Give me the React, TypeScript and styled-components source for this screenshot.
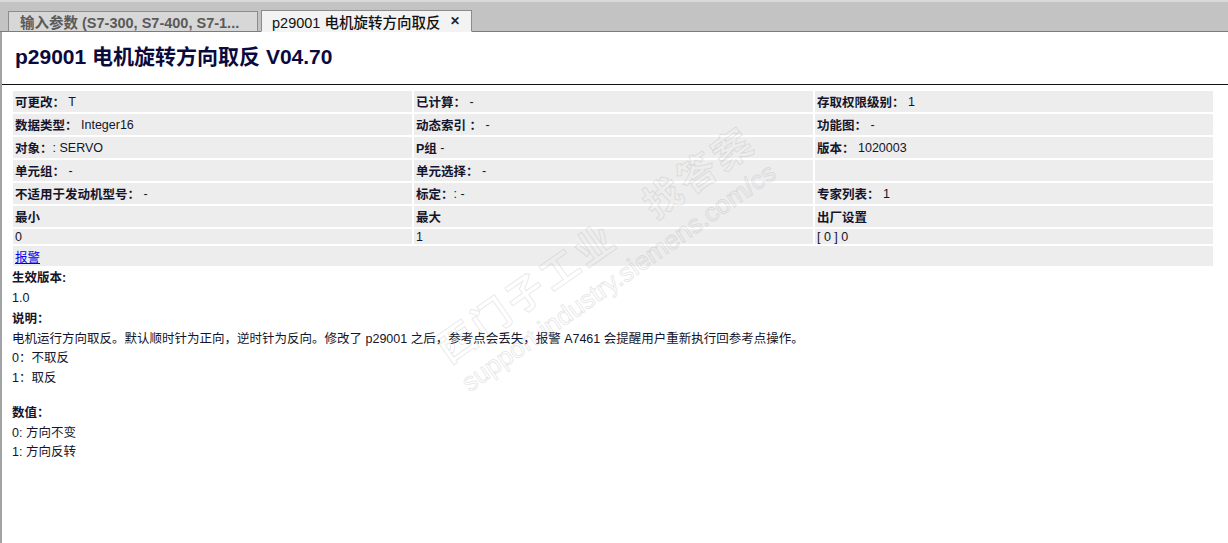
import styled, { createGlobalStyle } from "styled-components";

const GlobalStyle = createGlobalStyle`
  html, body {
    margin: 0;
    padding: 0;
    background: #ffffff;
  }
  body {
    font-family: "Liberation Sans", "Noto Sans CJK SC", sans-serif;
    overflow: hidden;
  }
`;

const fields = [
  [
    { label: "可更改：", value: " T" },
    { label: "已计算：", value: " -" },
    { label: "存取权限级别：", value: " 1" },
  ],
  [
    { label: "数据类型：", value: " Integer16" },
    { label: "动态索引 ：", value: " -" },
    { label: "功能图：", value: " -" },
  ],
  [
    { label: "对象：", value: ": SERVO" },
    { label: "P组", value: " -" },
    { label: "版本：", value: " 1020003" },
  ],
  [
    { label: "单元组：", value: " -" },
    { label: "单元选择：", value: " -" },
    { label: "", value: "" },
  ],
  [
    { label: "不适用于发动机型号：", value: " -" },
    { label: "标定：", value: ": -" },
    { label: "专家列表：", value: " 1" },
  ],
  [
    { label: "最小", value: "" },
    { label: "最大", value: "" },
    { label: "出厂设置", value: "" },
  ],
];

const App = () => {
  return (
    <>
      <GlobalStyle />
      <Page>
        <TabBar>
          <Tab>输入参数 (S7-300, S7-400, S7-1...</Tab>
          <Tab $active>
            p29001 电机旋转方向取反
            <Close>✕</Close>
          </Tab>
        </TabBar>
        <Content>
          <Title>p29001 电机旋转方向取反 V04.70</Title>
          <Rule />
          <Table>
            {fields.map((row) =>
              row.map((cell, i) => (
                <Cell key={row[0].label + i}>
                  <Label>{cell.label}</Label>
                  {cell.value}
                </Cell>
              ))
            )}
            <Cell $short>0</Cell>
            <Cell $short>1</Cell>
            <Cell $short>[ 0 ] 0</Cell>
            <Cell $wide>
              <Link href="#">报警</Link>
            </Cell>
          </Table>
          <Details>
            <Heading>生效版本:</Heading>
            <Line>1.0</Line>
            <Heading $gap>说明：</Heading>
            <Line>
              电机运行方向取反。默认顺时针为正向，逆时针为反向。修改了 p29001
              之后，参考点会丢失，报警 A7461 会提醒用户重新执行回参考点操作。
            </Line>
            <Line>0：不取反</Line>
            <Line>1：取反</Line>
            <Spacer />
            <Heading>数值：</Heading>
            <Line>0: 方向不变</Line>
            <Line>1: 方向反转</Line>
          </Details>
          <Watermark>
            <MarkBig>西门子工业　找答案</MarkBig>
            <MarkSmall>support.industry.siemens.com/cs</MarkSmall>
          </Watermark>
        </Content>
      </Page>
    </>
  );
};

const Page = styled.div`
  width: 1228px;
  height: 543px;
  display: flex;
  flex-direction: column;
  overflow: hidden;
`;

const TabBar = styled.div`
  height: 32px;
  flex-shrink: 0;
  background: #c3c3c3;
  border-top: 2px solid #d9d9d9;
  border-bottom: 1px solid #7c7c7c;
  box-sizing: border-box;
  display: flex;
  align-items: flex-end;
  gap: 3px;
  padding-left: 8px;
`;

const Tab = styled.div<{ $active?: boolean }>`
  height: ${(p) => (p.$active ? 22 : 21)}px;
  box-sizing: border-box;
  margin-bottom: -1px;
  padding: 0 8px 0 ${(p) => (p.$active ? 10 : 11)}px;
  width: ${(p) => (p.$active ? 211 : 250)}px;
  display: flex;
  align-items: center;
  background: ${(p) => (p.$active ? "#f3f3f3" : "#d7d7d7")};
  border: 1px solid #8c8c8c;
  border-bottom: ${(p) => (p.$active ? "1px solid #f3f3f3" : "1px solid #7c7c7c")};
  color: ${(p) => (p.$active ? "#111111" : "#5a5a5a")};
  font-size: 14.5px;
  font-weight: ${(p) => (p.$active ? 500 : 700)};
  white-space: nowrap;
  overflow: hidden;
`;

const Close = styled.span`
  margin-left: 10px;
  font-size: 12px;
  font-weight: 700;
  color: #222;
`;

const Content = styled.div`
  position: relative;
  flex: 1;
  border-left: 2px solid #a3a3a3;
  overflow: hidden;
`;

const Title = styled.h1`
  margin: 0;
  padding: 12px 0 0 13px;
  height: 52px;
  box-sizing: border-box;
  font-size: 21px;
  font-weight: 700;
  color: #0a0a3c;
  line-height: 26px;
`;

const Rule = styled.div`
  height: 1px;
  background: #111;
`;

const Table = styled.div`
  margin: 6px 0 0 11px;
  width: 1200px;
  display: grid;
  grid-template-columns: 399px 399px 398px;
  column-gap: 2px;
  row-gap: 2px;
`;

const Cell = styled.div<{ $short?: boolean; $wide?: boolean }>`
  background: #ededed;
  height: ${(p) => (p.$short ? 15 : p.$wide ? 20 : 21)}px;
  grid-column: ${(p) => (p.$wide ? "1 / span 3" : "auto")};
  padding-left: 2px;
  display: flex;
  align-items: center;
  font-size: 12.5px;
  color: #14142a;
  white-space: pre;
`;

const Label = styled.span`
  font-weight: 700;
`;

const Link = styled.a`
  color: #0000ee;
  text-decoration: underline;
`;

const Details = styled.div`
  padding: 3px 0 0 10px;
  font-size: 12.5px;
  color: #14142a;
  line-height: 19.5px;
`;

const Heading = styled.div<{ $gap?: boolean }>`
  font-weight: 700;
  margin-top: ${(p) => (p.$gap ? 2 : 0)}px;
`;

const Line = styled.div``;

const Spacer = styled.div`
  height: 16px;
`;

const Watermark = styled.div`
  position: absolute;
  left: 412px;
  top: 180px;
  transform: rotate(-35deg);
  transform-origin: center;
  pointer-events: none;
  display: flex;
  flex-direction: column;
  align-items: center;
  color: transparent;
`;

const MarkBig = styled.div`
  font-size: 38px;
  font-weight: 700;
  letter-spacing: 4px;
  -webkit-text-stroke: 1px rgba(150, 150, 150, 0.22);
  white-space: nowrap;
`;

const MarkSmall = styled.div`
  font-size: 26px;
  -webkit-text-stroke: 1px rgba(150, 150, 150, 0.22);
  white-space: nowrap;
`;

export default App;
